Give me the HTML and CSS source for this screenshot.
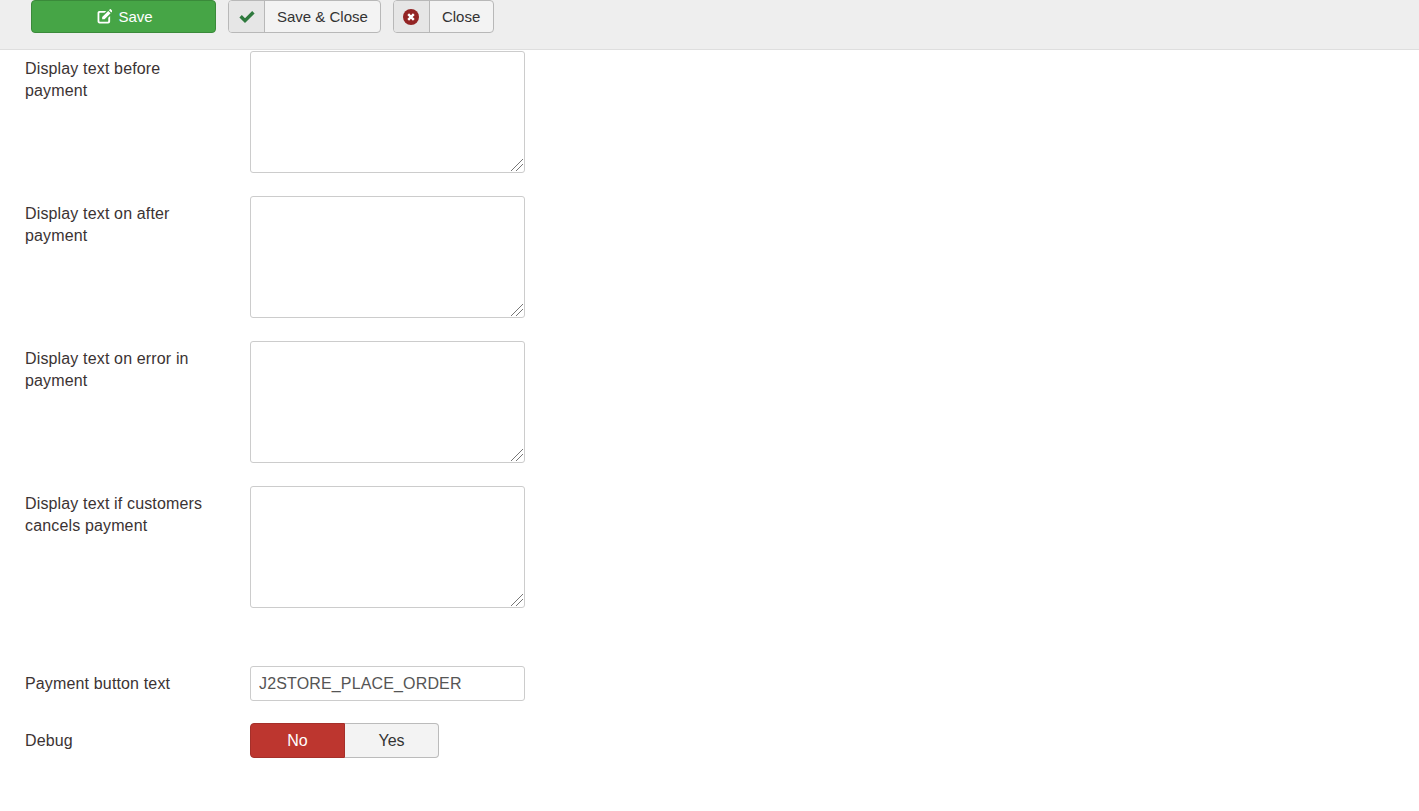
FILE: index.html
```html
<!DOCTYPE html>
<html lang="en">
<head>
<meta charset="utf-8">
<title>Payment settings</title>
<link rel="stylesheet" href="styles.css">
</head>
<body>
<div class="toolbar">
  <button class="btn btn-save" type="button">
    <svg class="save-icon" viewBox="0 0 16 16" width="15" height="15"><path fill="#fff" d="M2.500 2H10L8 4H3a.5.5 0 0 0-.5.5v8.400c0 .3.2.6.5.6h8.500c.3 0 .5-.3.5-.6V9.400L14 7.400v6c0 1.200-1 2.100-2.100 2.100H2.700c-1.200 0-2.100-1-2.100-2.100V4.100C.6 3 1.400 2 2.500 2z"/><path fill="#fff" d="M5.500 8.500 12 2l2.500 2.500-6.500 6.500H5.500V8.500zM12.800 1.200l.9-.9c.3-.3.7-.3 1 0l1.500 1.500c.3.3.3.7 0 1l-.9.9-2.500-2.500z"/></svg>
    Save
  </button>
  <button class="btn btn-split" type="button">
    <span class="btn-icon"><svg viewBox="0 0 16 14" width="16" height="14"><path fill="#2f7a3e" d="M0.400 7.400 2.800 5 6 8.200 13.200 1 15.600 3.400 6 13z"/></svg></span>
    <span class="btn-label">Save &amp; Close</span>
  </button>
  <button class="btn btn-split btn-close" type="button">
    <span class="btn-icon"><svg viewBox="0 0 16 16" width="16" height="16"><circle cx="8" cy="8" r="8" fill="#932424"/><path stroke="#fff" stroke-width="2.400" d="M5.200 5.200l5.600 5.600M10.800 5.200l-5.600 5.600"/></svg></span>
    <span class="btn-label">Close</span>
  </button>
</div>
<form class="form">
  <div class="row row-area">
    <label class="label">Display text before payment</label>
    <textarea class="area"></textarea>
  </div>
  <div class="row row-area">
    <label class="label">Display text on after payment</label>
    <textarea class="area"></textarea>
  </div>
  <div class="row row-area">
    <label class="label">Display text on error in payment</label>
    <textarea class="area"></textarea>
  </div>
  <div class="row row-area">
    <label class="label">Display text if customers cancels payment</label>
    <textarea class="area"></textarea>
  </div>
  <div class="row row-input">
    <label class="label">Payment button text</label>
    <input class="input" type="text" value="J2STORE_PLACE_ORDER">
  </div>
  <div class="row row-toggle">
    <label class="label">Debug</label>
    <div class="toggle">
      <span class="toggle-no">No</span>
      <span class="toggle-yes">Yes</span>
    </div>
  </div>
</form>
</body>
</html>
```
FILE: styles.css
```css
* { box-sizing: border-box; }
html, body { margin: 0; padding: 0; height: 100%; overflow: hidden; background: #fff; }
body { font-family: "Liberation Sans", Arial, sans-serif; font-size: 16px; line-height: 22px; color: #333; }

.toolbar {
  display: flex;
  align-items: flex-start;
  gap: 12px;
  height: 50px;
  padding-left: 31px;
  background: #eee;
  border-bottom: 1px solid #dedede;
}
.btn {
  display: flex;
  align-items: center;
  height: 33px;
  padding: 0;
  margin: 0;
  font: inherit;
  font-size: 15px;
  border-radius: 4px;
  color: #333;
  background: #f3f3f3;
  border: 1px solid #b8b8b8;
}
.btn-save {
  width: 185px;
  padding-left: 3px;
  justify-content: center;
  gap: 6px;
  color: #fff;
  background: #46a546;
  border-color: #3a8a3a;
}
.save-icon { display: block; }
.btn-split { overflow: hidden; }
.btn-icon {
  display: flex;
  align-items: center;
  justify-content: center;
  width: 36px;
  height: 100%;
  background: #e6e6e6;
  border-right: 1px solid #b8b8b8;
}
.btn-label { padding: 0 12px; }
.btn-close .btn-label { padding-right: 13px; }

.form { padding: 1px 0 0 25px; }
.row { display: flex; align-items: flex-start; }
.label {
  display: block;
  width: 225px;
  padding: 7px 40px 0 0;
  color: #3b3333;
  letter-spacing: 0.15px;
}
.row-area { margin-bottom: 23px; }
.area {
  display: block;
  width: 275px;
  height: 122px;
  margin: 0;
  background: #fff;
  border: 1px solid #ccc;
  border-radius: 3px;
}
.area::-webkit-resizer {
  background-image: linear-gradient(135deg, transparent 8px, #777 8px, #777 9px, transparent 9px, transparent 11.5px, #777 11.5px, #777 12.5px, transparent 12.5px);
  background-size: 12px 12px;
  background-position: 2px 2px;
  background-repeat: no-repeat;
}
.row-input { margin-top: 58px; }
.input {
  display: block;
  width: 275px;
  height: 35px;
  margin: 0;
  padding: 0 8px;
  font: inherit;
  letter-spacing: 0.15px;
  color: #555;
  background: #fff;
  border: 1px solid #ccc;
  border-radius: 3px;
}
.row-toggle { margin-top: 22px; }
.toggle { display: flex; height: 35px; text-align: center; line-height: 33px; }
.toggle-no {
  width: 95px;
  color: #fff;
  background: #bd362f;
  border: 1px solid #a5302a;
  border-radius: 4px 0 0 4px;
}
.toggle-yes {
  width: 94px;
  color: #333;
  background: #f3f3f3;
  border: 1px solid #bbb;
  border-left: 0;
  border-radius: 0 4px 4px 0;
}
```
